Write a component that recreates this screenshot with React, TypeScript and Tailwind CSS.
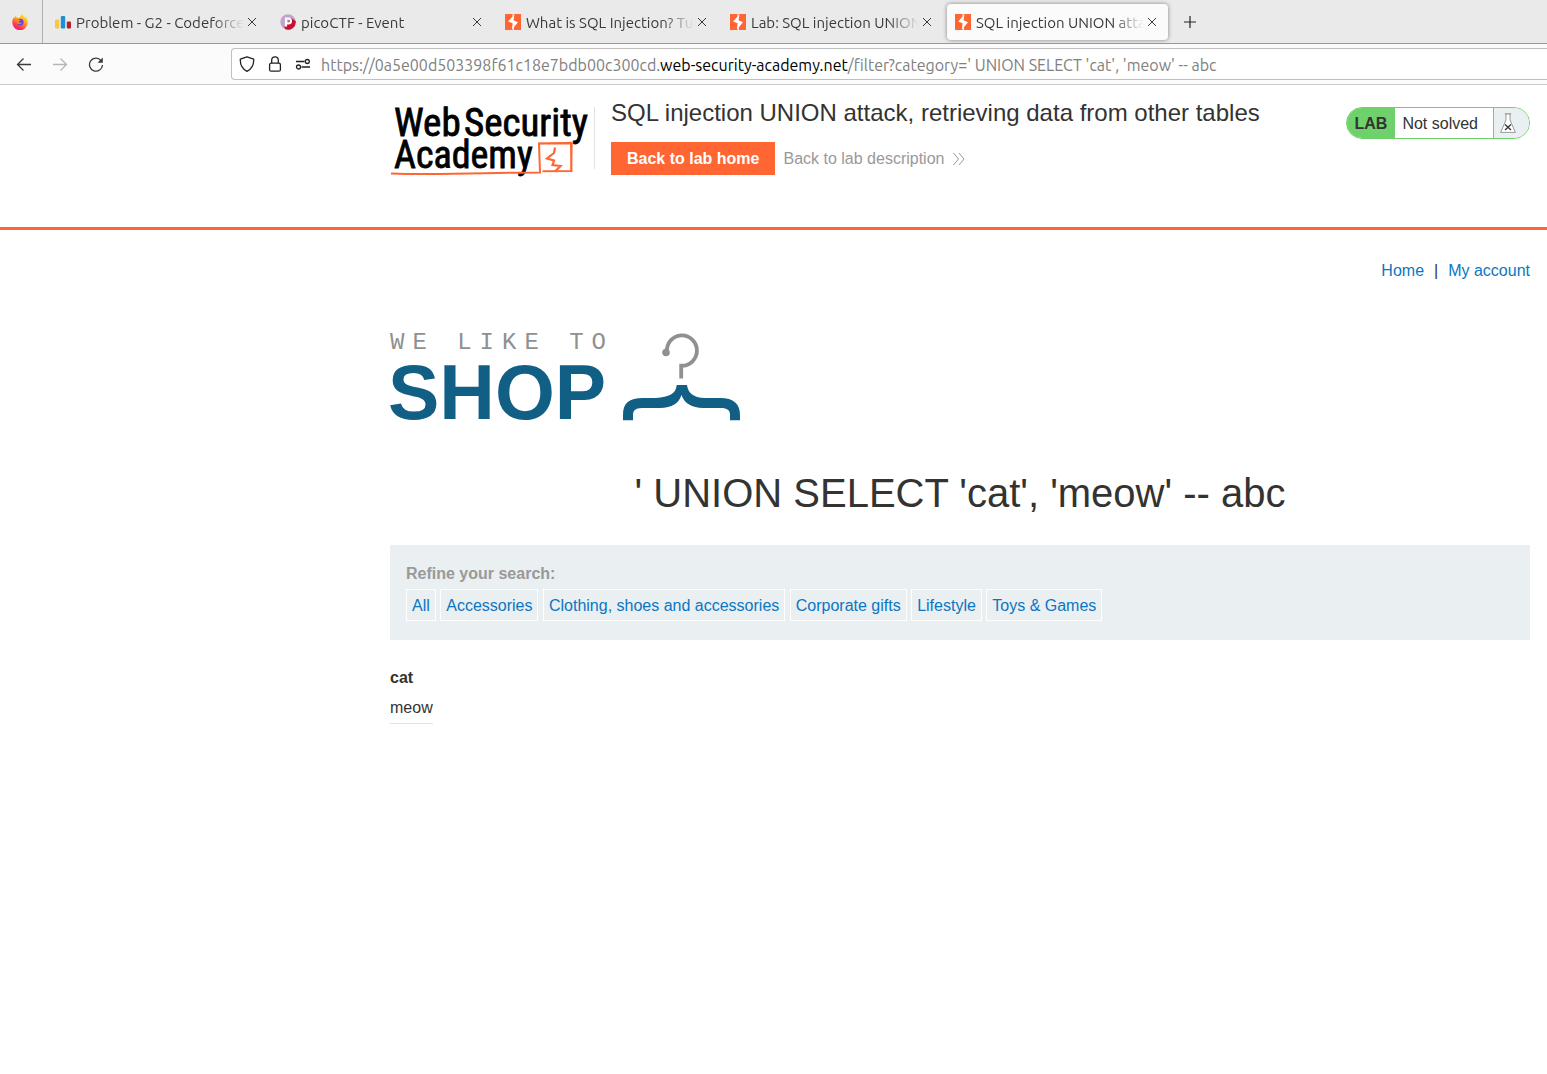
import React from "react";

const CloseIcon = () => (
  <svg width="10" height="10" viewBox="0 0 10 10" fill="none" stroke="#3a3a3a" strokeWidth="1">
    <path d="M1 1l8 8M9 1l-8 8" />
  </svg>
);

const CodeforcesIcon = () => (
  <svg className="shrink-0" width="16" height="16" viewBox="0 0 16 16">
    <rect x="0" y="5.5" width="4.2" height="9" rx="1" fill="#f8c843" />
    <rect x="5.8" y="2" width="4.4" height="12.5" rx="1" fill="#1e8fd0" />
    <rect x="11.8" y="7.5" width="4.2" height="7" rx="1" fill="#b8202e" />
  </svg>
);

const PicoIcon = () => (
  <svg className="shrink-0" width="16" height="16" viewBox="0 0 16 16">
    <circle cx="8" cy="8" r="7.7" fill="#c4a1cd" />
    <path d="M15.7 7A7.7 7.7 0 0 1 5 15.1L4.5 12.5 11 4z" fill="#c8102e" />
    <path d="M6 12.5V4.5h2.5a2.4 2.4 0 0 1 0 4.8H6" fill="none" stroke="#fff" strokeWidth="2.2" />
  </svg>
);

const BurpIcon = () => (
  <svg className="shrink-0" width="16" height="16" viewBox="0 0 16 16">
    <rect width="16" height="16" fill="#ff6633" />
    <path d="M9.500 0.300L3.200 7.400 7.600 9.300 6.900 15.700 12.900 8.300 8.500 6.300z" fill="#fff" />
    <path d="M8 0v2.500M8.300 13.500V16" stroke="#fff" strokeWidth="1" />
  </svg>
);

const FirefoxIcon = () => (
  <svg width="16" height="16" viewBox="0 0 16 16">
    <defs>
      <linearGradient id="fx" x1="0.8" y1="0" x2="0.25" y2="1">
        <stop offset="0.1" stopColor="#ffe03a" />
        <stop offset="0.45" stopColor="#ff9a1f" />
        <stop offset="0.75" stopColor="#ff3a4c" />
        <stop offset="1" stopColor="#e8128f" />
      </linearGradient>
    </defs>
    <path
      d="M10.2 0c.4 1.600 2.200 2.300 3 3.800.3-.3.300-.8.200-1.200C15 4 16 6.200 15.700 8.600A7.700 7.700 0 0 1 .3 8.500C.2 6.500.8 4.700 1.700 3.600c0 .5.100.8.300 1 .3-1.200 1-2 1.800-2.600 0 .6.2 1.100.6 1.400 1.200-.1 2.400.1 3.300.6C8 2.300 8.800.8 10.200 0z"
      fill="url(#fx)"
    />
    <circle cx="8.2" cy="8.2" r="3.4" fill="#7440d8" />
    <path d="M3.800 5.500c1.200-.8 2.500-.7 3.600.2l1.200.3c-.3.900-1.700.9-2 1.900.6 1.300 2.400.9 3.200.7-.7 2-3.600 2.300-4.800.5-.6-1-.7-2.400-1.200-3.600z" fill="#ff8a16" />
  </svg>
);

const tabs = [
  { title: "Problem - G2 - Codeforces", icon: <CodeforcesIcon />, active: false },
  { title: "picoCTF - Event", icon: <PicoIcon />, active: false },
  { title: "What is SQL Injection? Tutorial", icon: <BurpIcon />, active: false },
  { title: "Lab: SQL injection UNION", icon: <BurpIcon />, active: false },
  { title: "SQL injection UNION attack", icon: <BurpIcon />, active: true },
];

const TabBar = () => (
  <div className="flex h-11 items-stretch overflow-hidden border-b border-[#989898] bg-[#eaeaea]">
    <button aria-label="Firefox View" className="flex w-[43px] shrink-0 items-center justify-center border-r border-[#b0b0b0] pr-0.5">
      <FirefoxIcon />
    </button>
    <div role="tablist" className="flex shrink-0 pl-0.5">
      {tabs.map((t) => (
        <div key={t.title} className="w-[225px] px-0.5 pt-1 pb-0.5">
          <div
            className={
              t.active
                ? "flex h-9 items-center gap-[5px] rounded bg-[#fbfbfb] px-2 shadow-[0_0_4px_rgba(0,0,0,0.45)]"
                : "flex h-9 items-center gap-[5px] px-2"
            }
          >
            {t.icon}
            <button
              role="tab"
              aria-selected={t.active}
              className="min-w-0 flex-1 overflow-hidden pt-0.5 text-left text-[15px] whitespace-nowrap text-[#3a3a3a] [mask-image:linear-gradient(to_left,transparent,black_32px)]"
            >
              {t.title}
            </button>
            <button aria-label={"Close " + t.title} className="-ml-[5px] flex size-4 items-center justify-center">
              <CloseIcon />
            </button>
          </div>
        </div>
      ))}
    </div>
    <button aria-label="New tab" className="flex w-10 items-center justify-center">
      <svg width="12" height="12" viewBox="0 0 12 12" stroke="#222" strokeWidth="1.2">
        <path d="M6 0v12M0 6h12" />
      </svg>
    </button>
  </div>
);

const address =
  "https://0a5e00d503398f61c18e7bdb00c300cd.web-security-academy.net/filter?category=' UNION SELECT 'cat', 'meow' -- abc";

const Toolbar = () => (
  <div className="flex h-[41px] items-center border-b border-[#cccccc] bg-[#fbfbfb] pl-1.5">
    <div className="flex w-[225px] shrink-0">
      <button aria-label="Back" className="flex size-9 items-center justify-center">
        <svg width="16" height="16" viewBox="0 0 16 16" fill="none" stroke="#3a3a3a" strokeWidth="1.3">
          <path d="M15 8.500H1.500M7.500 2.500l-6 6 6 6" />
        </svg>
      </button>
      <button aria-label="Forward" className="flex size-9 items-center justify-center">
        <svg width="16" height="16" viewBox="0 0 16 16" fill="none" stroke="#b5b5b5" strokeWidth="1.3">
          <path d="M1 8.500h13.500M8.500 2.500l6 6-6 6" />
        </svg>
      </button>
      <button aria-label="Reload" className="flex size-9 items-center justify-center">
        <svg width="16" height="16" viewBox="0 0 16 16" fill="none" stroke="#3a3a3a" strokeWidth="1.3">
          <path d="M13 4.500A6.500 6.500 0 1 0 14.500 9" />
          <path d="M14.800 1.500v5.200H9.600z" fill="#3a3a3a" stroke="none" />
        </svg>
      </button>
    </div>
    <div className="flex h-8 min-w-0 flex-1 items-center rounded-l border border-r-0 border-[#c0c0c0] bg-white pl-[7px]">
      <div className="flex shrink-0 gap-3">
        <svg width="16" height="16" viewBox="0 0 16 16" fill="none" stroke="#222" strokeWidth="1.3" strokeLinejoin="round">
          <path d="M8 .8l6.700 2.400c.2 5.300-1.700 9.600-6.700 12.100C3 12.800 1.100 8.500 1.300 3.200z" />
        </svg>
        <svg width="16" height="16" viewBox="0 0 16 16" fill="none" stroke="#222" strokeWidth="1.3">
          <rect x="2.6" y="7.2" width="10.8" height="8" rx="1.5" />
          <path d="M4.700 7.200V4.200a3.300 3.300 0 0 1 6.600 0v3" />
        </svg>
        <svg width="16" height="16" viewBox="0 0 16 16" fill="none" stroke="#222" strokeWidth="1.3">
          <path d="M1 5.500h8.500M6.500 11H15" />
          <circle cx="12.3" cy="5.5" r="2" />
          <circle cx="3.5" cy="11" r="2" />
        </svg>
      </div>
      <div className="ml-2.5 grid min-w-0 flex-1 items-center pt-px text-[16px] leading-6 whitespace-pre">
        <div aria-hidden="true" className="col-start-1 row-start-1 overflow-hidden text-[#808080]">
          https://0a5e00d503398f61c18e7bdb00c300cd.
          <span className="text-black">web-security-academy.net</span>
          /filter?category=' UNION SELECT 'cat', 'meow' -- abc
        </div>
        <input
          aria-label="Address"
          defaultValue={address}
          className="col-start-1 row-start-1 w-full bg-transparent text-transparent caret-black outline-none"
        />
      </div>
    </div>
  </div>
);

const AcademyLogo = () => (
  <svg className="shrink-0 overflow-visible" width="200" height="72" viewBox="0 0 200 72" role="img" aria-label="Web Security Academy">
    <g fontFamily="'Roboto Condensed', 'Ubuntu Condensed', Roboto, sans-serif" fill="#000" stroke="#000" strokeWidth="0.8">
      <text x="4" y="29" fontSize="39">Web</text>
      <text x="74" y="29" fontSize="39">Security</text>
      <text x="4" y="61" fontSize="38">Academy</text>
    </g>
    <g fill="none" stroke="#ff6633">
      <path d="M1 66.500c50 2 100-1 149-1l-1-29 32 0 .500 27.500-29 .2" strokeWidth="2" />
      <path d="M149 36.500l33-1-1 29" strokeWidth="1.5" />
      <path d="M165 40.500l-1 5.500-7 5.500 7 2-1.500 4.500 8 1-5.500 5.500" strokeWidth="2.2" />
    </g>
  </svg>
);

const LabStatus = () => (
  <div className="mt-[22px] ml-auto flex h-8 shrink-0 overflow-hidden rounded-full border border-[#6fd16b]">
    <span className="flex items-center bg-[#6fd16b] px-2 pt-0.5 font-bold">LAB</span>
    <span className="flex items-center border-r border-[#6fd16b] pt-px pr-[15px] pl-[7px]">Not solved</span>
    <span className="flex w-[35px] items-center bg-[#eaeff2] pl-1.5">
      <svg width="16" height="20" viewBox="0 0 16 20" fill="none">
        <path d="M6 .5v6.500L.6 19.400h14.800L10 7V.5" fill="#fff" stroke="#999" />
        <path d="M4.800 .8h6.400" stroke="#999" strokeWidth="1.3" />
        <path d="M5 11.500l6 5.500M11 11.500L5 17" stroke="#333" strokeWidth="1.3" />
      </svg>
    </span>
  </div>
);

const Hanger = () => (
  <svg className="mt-1.5 shrink-0" width="118" height="88" viewBox="0 0 118 88" fill="none">
    <path d="M44 19A15 15.200 0 1 1 58.200 32.700V45.500" stroke="#8f9090" strokeWidth="3.8" />
    <circle cx="43" cy="19.5" r="3.8" fill="#8f9090" />
    <path
      d="M0 87.300V82C0 70 6 65 20 65H33C46 64 53 61 53.700 52H64C65 60 70 64.500 82 65H97C111 65 117 71 117 82V87.300H107V82C107 77 104 75 98 75H80C69 75 61 70 58.500 62C56 70 49 75 37 75H19C12 75 10 78 10 82V87.300z"
      fill="#125f85"
    />
  </svg>
);

const filters = ["All", "Accessories", "Clothing, shoes and accessories", "Corporate gifts", "Lifestyle", "Toys & Games"];

export default function App() {
  return (
    <div className="bg-white font-['Liberation_Sans',Arial,sans-serif] text-base leading-6 text-[#333332]">
      <div className="font-['Ubuntu','Noto_Sans',sans-serif]">
        <TabBar />
        <Toolbar />
      </div>

      <header className="h-[145px] border-b-3 border-[#ff6633]">
        <div className="mr-[17px] ml-[390px] flex items-start">
          <div className="mt-[22px] flex h-[72px] shrink-0 items-start">
            <AcademyLogo />
          </div>
          <div className="mt-[22px] ml-1 h-[62px] w-px shrink-0 bg-[#e2e2e2]" />
          <div className="mt-3 ml-4 min-w-0">
            <h2 className="text-2xl leading-8">SQL injection UNION attack, retrieving data from other tables</h2>
            <div className="mt-[13px] flex items-center gap-2">
              <a href="#home" className="bg-[#ff6633] px-4 py-1 font-bold leading-[25px] text-white">
                Back to lab home
              </a>
              <a href="#description" className="flex items-center gap-2 text-[#999999]">
                Back to lab description
                <svg width="14" height="14" viewBox="0 0 14 14" fill="none" stroke="#999" strokeWidth="1">
                  <path d="M1.500 1l5 6-5 6M7 1l5 6-5 6" />
                </svg>
              </a>
            </div>
          </div>
          <LabStatus />
        </div>
      </header>

      <main className="mr-[17px] ml-[390px]">
        <nav className="flex justify-end gap-2.5 pt-[29px]">
          <a href="#" className="text-[#0b76c2]">Home</a>
          <span>|</span>
          <a href="#account" className="text-[#0b76c2]">My account</a>
        </nav>

        <div className="mt-11 flex items-start">
          <div className="flex w-[233px] flex-col">
            <div className="font-['Liberation_Mono',monospace] text-2xl leading-8 tracking-[8px] whitespace-nowrap text-[#8f9090]">
              WE LIKE TO
            </div>
            <div className="-ml-0.5 text-[77px] leading-[66px] font-bold text-[#125f85]">SHOP</div>
          </div>
          <Hanger />
        </div>

        <h1 className="mt-11 text-center text-[40px] leading-12">' UNION SELECT 'cat', 'meow' -- abc</h1>

        <section className="mt-7 bg-[#eaeff2] px-4 pt-[17px] pb-[19px]">
          <p className="font-bold text-[#999999]">Refine your search:</p>
          <div className="mt-[3px]">
            {filters.map((f) => (
              <React.Fragment key={f}>
                <a href="#filter" className="inline-block border border-white px-[5px] pt-1 pb-0.5 text-[#0b76c2]">
                  {f}
                </a>{" "}
              </React.Fragment>
            ))}
          </div>
        </section>

        <table className="mt-[26px] text-left">
          <tbody>
            <tr>
              <th className="pb-1.5 font-bold">cat</th>
            </tr>
            <tr>
              <td className="border-b border-[#e2e2e2] pb-[3px]">meow</td>
            </tr>
          </tbody>
        </table>
      </main>
    </div>
  );
}
